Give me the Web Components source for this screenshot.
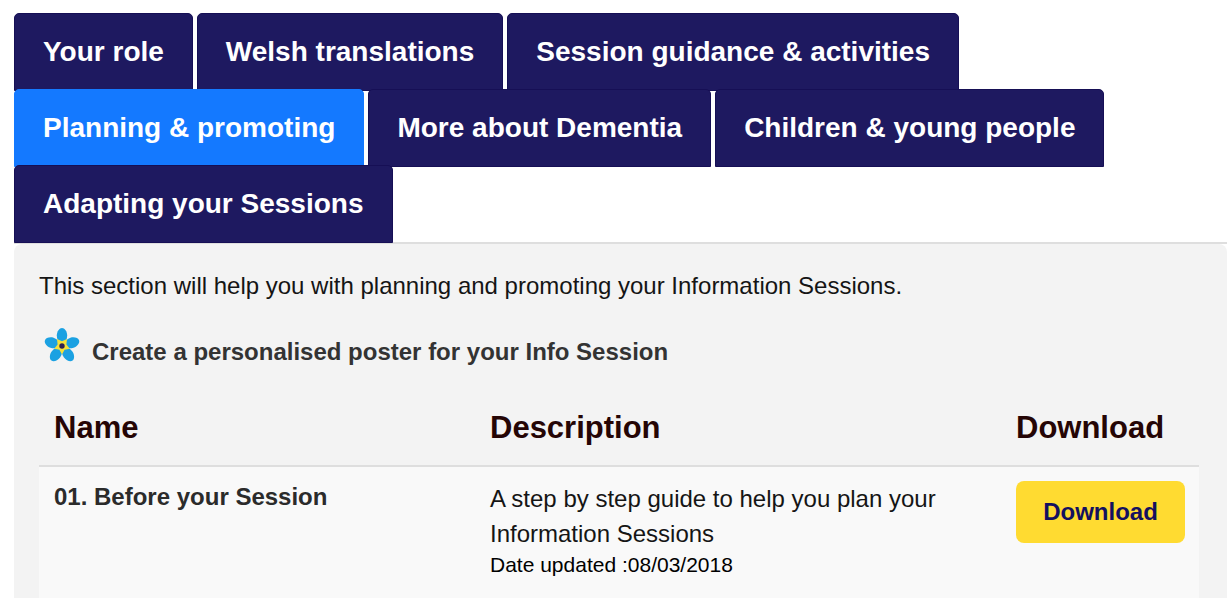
<!DOCTYPE html>
<html lang="en">
<head>
<meta charset="utf-8">
<meta name="viewport" content="width=device-width, initial-scale=1">
<title>Planning &amp; promoting</title>
<style>
body { margin: 0; background: #fff; color: #151515; font: 24px/36px "Liberation Sans", Arial, sans-serif; }
</style>
</head>
<body>
<resource-page></resource-page>

<template id="page-template">
  <style>
    :host { display: block; padding: 13px 1px 0 14px; }
  </style>
  <tab-bar>
    <tab-link>Your role</tab-link>
    <tab-link>Welsh translations</tab-link>
    <tab-link>Session guidance &amp; activities</tab-link>
    <tab-link selected>Planning &amp; promoting</tab-link>
    <tab-link>More about Dementia</tab-link>
    <tab-link>Children &amp; young people</tab-link>
    <tab-link>Adapting your Sessions</tab-link>
  </tab-bar>
  <tab-panel>
    <span slot="intro">This section will help you with planning and promoting your Information Sessions.</span>
    <poster-link slot="action">Create a personalised poster for your Info Session</poster-link>
    <resource-table></resource-table>
  </tab-panel>
</template>

<template id="bar-template">
  <style>
    :host { display: block; border-bottom: 2px solid #dedede; }
    nav { display: flex; flex-wrap: wrap; column-gap: 4px; padding-bottom: 1px; }
  </style>
  <nav aria-label="Resources"><slot></slot></nav>
</template>

<template id="tab-template">
  <style>
    :host { display: block; margin-bottom: -2px; }
    a {
      display: block; box-sizing: border-box; padding: 21px 28px; border: 1px solid #160f55;
      border-radius: 5px 5px 0 0; background: #1e1960; color: #fff;
      font-size: 28px; line-height: 34px; font-weight: bold; text-decoration: none; white-space: nowrap;
    }
    :host([selected]) a { background: #1479ff; border-color: #1479ff; }
  </style>
  <a href="#"><slot></slot></a>
</template>

<template id="panel-template">
  <style>
    :host { display: block; padding: 24px 28px 0 25px; border-radius: 8px 8px 0 0; background: #f3f3f3; }
    p { margin: 0; }
    .action { margin: 30px 0 20px; }
  </style>
  <p><slot name="intro"></slot></p>
  <div class="action"><slot name="action"></slot></div>
  <slot></slot>
</template>

<template id="poster-template">
  <style>
    :host { display: block; }
    a { display: flex; align-items: center; gap: 12px; padding-left: 5px; color: #333; font-weight: bold; text-decoration: none; }
    svg { flex: none; width: 36px; height: 36px; margin: -14px 0 0; }
  </style>
  <a href="#">
    <svg viewBox="0 0 36 36" aria-hidden="true">
      <defs><path id="petal" d="M18 19C14.500 16 12.800 12 12.800 8.500C12.800 4.500 15.500 1 18 1S23.200 4.500 23.200 8.500C23.200 12 21.500 16 18 19Z"/></defs>
      <g fill="#1ba1e2">
        <use href="#petal"/><use href="#petal" transform="rotate(72 18 19)"/>
        <use href="#petal" transform="rotate(144 18 19)"/><use href="#petal" transform="rotate(216 18 19)"/>
        <use href="#petal" transform="rotate(288 18 19)"/>
      </g>
      <path fill="#f5e03a" d="M18 27.500L15.400 22.800L10.200 21.700L13.600 17.600L13 12L18 14.300L23 12L22.400 17.600L25.800 21.700L20.600 22.800Z"/>
      <circle cx="18" cy="19" r="2.700" fill="#302050"/>
    </svg>
    <span><slot></slot></span>
  </a>
</template>

<template id="table-template">
  <style>
    :host { display: block; }
    table { width: 100%; border-collapse: separate; border-spacing: 0; table-layout: fixed; }
    th, td { box-sizing: border-box; padding: 14px 14px 20px 15px; text-align: left; vertical-align: top; }
    thead th { padding-top: 20px; padding-bottom: 19px; border-bottom: 2px solid #dedede; color: #250505; font-size: 31px; line-height: 36px; }
    tbody { background: #f9f9f9; }
    tbody th { color: #2b2b2b; line-height: 32px; }
    td { line-height: 35px; }
    p { margin: 0; }
    .date { color: #000; font-size: 21px; line-height: 28px; }
    .name { width: 436px; }
    .download { width: 198px; }
  </style>
  <table>
    <thead>
      <tr><th class="name" scope="col">Name</th><th scope="col">Description</th><th class="download" scope="col">Download</th></tr>
    </thead>
    <tbody>
      <tr>
        <th scope="row">01. Before your Session</th>
        <td><p>A step by step guide to help you plan your Information Sessions</p><p class="date">Date updated :08/03/2018</p></td>
        <td><download-button>Download</download-button></td>
      </tr>
    </tbody>
  </table>
</template>

<template id="button-template">
  <style>
    :host { display: block; }
    button {
      display: block; width: 100%; padding: 13px 0; border: 0; border-radius: 8px;
      background: #ffdb31; color: #14105f; font: bold 24px/36px "Liberation Sans", Arial, sans-serif; cursor: pointer;
    }
  </style>
  <button type="button"><slot></slot></button>
</template>

<script>
class TemplateElement extends HTMLElement {
  constructor() {
    super();
    const template = document.getElementById(this.constructor.template);
    this.attachShadow({ mode: "open" }).append(template.content.cloneNode(true));
  }
}
customElements.define("download-button", class extends TemplateElement { static template = "button-template"; });
customElements.define("resource-table", class extends TemplateElement { static template = "table-template"; });
customElements.define("poster-link", class extends TemplateElement { static template = "poster-template"; });
customElements.define("tab-panel", class extends TemplateElement { static template = "panel-template"; });
customElements.define("tab-link", class extends TemplateElement {
  static template = "tab-template";
  connectedCallback() {
    if (this.hasAttribute("selected")) this.shadowRoot.querySelector("a").setAttribute("aria-current", "page");
  }
});
customElements.define("tab-bar", class extends TemplateElement { static template = "bar-template"; });
customElements.define("resource-page", class extends TemplateElement { static template = "page-template"; });
</script>
</body>
</html>
